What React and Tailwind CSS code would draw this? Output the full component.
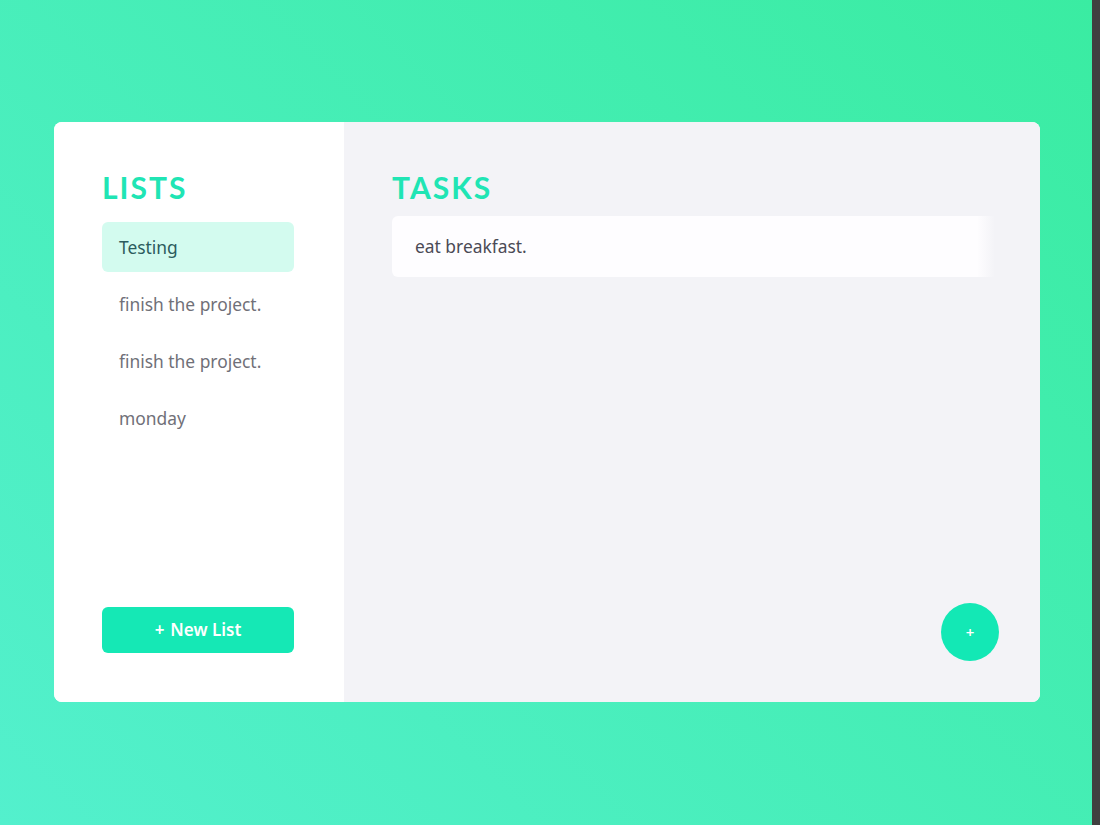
import { useState } from 'react';

const lists = ['Testing', 'finish the project.', 'finish the project.', 'monday'];

export default function App() {
  const [active, setActive] = useState(0);

  return (
    <div className="flex h-[825px] w-full">
      <div className="flex flex-1 items-start bg-[linear-gradient(45deg,#53f0cd,#3aeca2)] pl-[54px] pr-[52px] pt-[122px]">
        <div className="flex h-[580px] w-full overflow-hidden rounded-lg bg-white font-['Noto_Sans',sans-serif]">
          {/* Lists */}
          <div className="flex w-[290px] flex-col bg-white pb-[49px] pl-12 pt-[43px]">
            <h1 className="mb-[13px] font-['Lato',sans-serif] text-[30px] font-bold leading-[44px] tracking-[2px] text-[#20e5b4]">
              LISTS
            </h1>
            <ul className="flex w-[192px] flex-col gap-[7px]">
              {lists.map((name, i) => (
                <li
                  key={i}
                  onClick={() => setActive(i)}
                  className={`flex h-[50px] cursor-pointer items-center rounded-md px-[17px] text-[17.4px] ${
                    i === active ? 'bg-[#d3fbef] text-[#2c5b5d]' : 'text-[#707078]'
                  }`}
                >
                  {name}
                </li>
              ))}
            </ul>
            <button className="mt-auto flex h-[46px] w-[192px] items-center justify-center gap-[6px] rounded-md bg-[#15e8b5] text-[17px] font-semibold text-white">
              <span>+</span>
              <span>New List</span>
            </button>
          </div>

          {/* Tasks */}
          <div className="flex flex-1 flex-col bg-[#f3f3f7] pb-[41px] pl-12 pr-[45px] pt-[43px]">
            <h1 className="mb-[7px] font-['Lato',sans-serif] text-[30px] font-bold leading-[44px] tracking-[2px] text-[#20e5b4]">
              TASKS
            </h1>
            <div className="flex h-[61px] items-center rounded-l-md bg-[linear-gradient(to_right,#fefdff_97%,#f3f3f7)] px-[23px] text-[17.4px] text-[#4a4a55]">
              eat breakfast.
            </div>
            <div className="mt-auto flex justify-end">
              <button className="-mr-[4px] flex h-[58px] w-[58px] items-center justify-center rounded-full bg-[#13e8b5] text-[15px] font-semibold text-white">
                +
              </button>
            </div>
          </div>
        </div>
      </div>
      <div className="w-2 bg-[#404040]" />
    </div>
  );
}
